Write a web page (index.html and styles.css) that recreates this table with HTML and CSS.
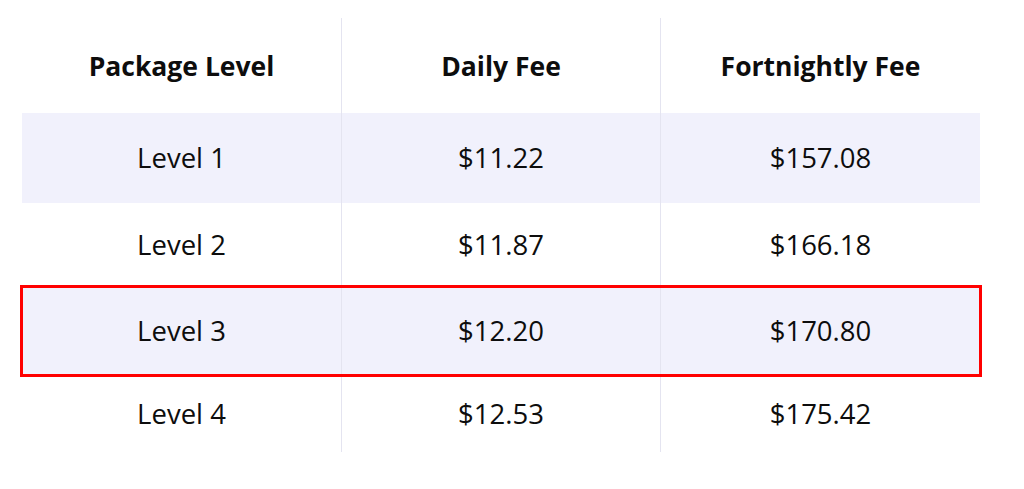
FILE: index.html
```html
<!DOCTYPE html>
<html lang="en">
<head>
<meta charset="utf-8">
<title>Package Level Fees</title>
<link rel="stylesheet" href="styles.css">
</head>
<body>
<main class="page">
  <div class="fee-table">
    <div class="row row-head">
      <div class="cell">Package Level</div>
      <div class="cell">Daily Fee</div>
      <div class="cell">Fortnightly Fee</div>
    </div>
    <div class="row row-shaded">
      <div class="cell">Level 1</div>
      <div class="cell">$11.22</div>
      <div class="cell">$157.08</div>
    </div>
    <div class="row">
      <div class="cell">Level 2</div>
      <div class="cell">$11.87</div>
      <div class="cell">$166.18</div>
    </div>
    <div class="row row-shaded row-highlight">
      <div class="cell">Level 3</div>
      <div class="cell">$12.20</div>
      <div class="cell">$170.80</div>
    </div>
    <div class="row">
      <div class="cell">Level 4</div>
      <div class="cell">$12.53</div>
      <div class="cell">$175.42</div>
    </div>
  </div>
</main>
</body>
</html>
```

FILE: styles.css
```css
html, body {
  margin: 0;
  padding: 0;
  background: #ffffff;
}

body {
  width: 1024px;
  height: 489px;
  overflow: hidden;
  font-family: "Open Sans", "Noto Sans", "Liberation Sans", sans-serif;
  color: #0d0d0d;
}

.page {
  padding: 18px 0 0 22px;
}

.fee-table {
  width: 958px;
  display: grid;
  grid-template-rows: 95px 90px 84px 88px 77px;
}

.row {
  display: grid;
  grid-template-columns: 319px 319px 320px;
  position: relative;
}

.row-shaded {
  background: #f1f1fc;
}

.row-highlight {
  outline: 3px solid #ff0000;
  outline-offset: -1px;
  z-index: 1;
}

.cell {
  display: flex;
  align-items: center;
  justify-content: center;
  font-size: 27.5px;
  line-height: 1;
}

.cell + .cell {
  border-left: 1px solid #e4e4f0;
}

.row-head .cell {
  font-weight: 700;
  font-size: 26.5px;
  padding-top: 2px;
}
```
